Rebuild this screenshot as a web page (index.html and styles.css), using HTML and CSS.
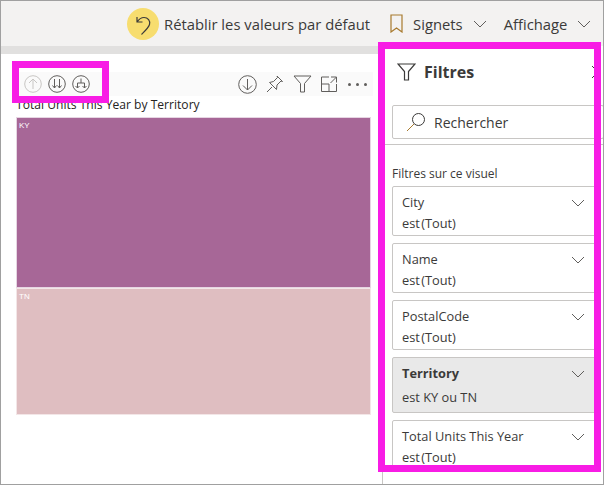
FILE: index.html
```html
<html>
	<head>
		<title>Filtres</title>
		<link rel="stylesheet" href="styles.css">
	</head>
	<body>
		<div class="window">
			<div class="toolbar">
				<span class="reset-circle">
					<svg width="20" height="24" viewBox="0 0 20 24" fill="none" stroke="#3b3a39" stroke-width="1.200"><path d="M4 5v5h5.500M4 10c2-3 4-4.500 7-4.500 4 0 6.500 3.500 5.500 7-.8 3-4.500 6.500-8 10"/></svg>
				</span>
				<span class="tool-label">Rétablir les valeurs par défaut</span>
				<svg class="bookmark" width="13" height="19" viewBox="0 0 13 19" fill="none" stroke="#a87a2e" stroke-width="1.200"><path d="M1 1h11v17l-5.500-4L1 18z"/></svg>
				<span class="tool-label signets">Signets</span>
				<svg class="chev" width="14" height="8" viewBox="0 0 14 8" fill="none" stroke="#605e5c"><path d="M1 1l6 6 6-6"/></svg>
				<span class="tool-label affichage">Affichage</span>
				<svg class="chev" width="14" height="8" viewBox="0 0 14 8" fill="none" stroke="#605e5c"><path d="M1 1l6 6 6-6"/></svg>
			</div>
			<div class="main">
				<div class="canvas">
					<div class="canvas-strip"></div>
					<div class="visual">
						<div class="visual-head">
							<div class="drill">
								<svg width="18" height="18" viewBox="0 0 18 18" fill="none" stroke="#c8c6c4"><circle cx="9" cy="9" r="8.300"/><path d="M9 14V4M5 8l4-4 4 4"/></svg>
								<svg width="18" height="18" viewBox="0 0 18 18" fill="none" stroke="#605e5c"><circle cx="9" cy="9" r="8.300"/><path d="M6.500 4v9M4.500 10.500l2 2.500 2-2.500M11.500 4v9M9.500 10.500l2 2.500 2-2.500"/></svg>
								<svg width="18" height="18" viewBox="0 0 18 18" fill="none" stroke="#605e5c"><circle cx="9" cy="9" r="8.300"/><path d="M9 3.500V8M5.500 13V8h7v5M3.500 11l2 2 2-2M10.500 11l2 2 2-2"/></svg>
							</div>
							<div class="actions">
								<svg width="19" height="19" viewBox="0 0 19 19" fill="none" stroke="#605e5c"><circle cx="9.500" cy="9.500" r="8.800"/><path d="M9.500 4v11M5 10.500l4.500 4.500 4.500-4.500"/></svg>
								<svg width="18" height="18" viewBox="0 0 18 18" fill="none" stroke="#605e5c"><path d="M1 17l5-5M3.500 7.500l7 7 .5-4.500 4-4 1.500.5L11 1l.5 1.500-4 4z"/></svg>
								<svg width="19" height="18" viewBox="0 0 19 18" fill="none" stroke="#605e5c"><path d="M1 1h17l-6.500 7.500V17h-4V8.500z"/></svg>
								<svg width="16" height="16" viewBox="0 0 16 16" fill="none" stroke="#605e5c"><path d="M8 1H.500v14.500H15.500V8M.500 8H8v7.500M10 1h5.500v5.500M15.500 1L9.500 7"/></svg>
								<span class="dots"><i></i><i></i><i></i></span>
							</div>
						</div>
						<div class="visual-title">Total Units This Year by Territory</div>
						<div class="treemap">
							<div class="tile tile-ky">KY</div>
							<div class="tile tile-tn">TN</div>
						</div>
					</div>
				</div>
				<div class="panel">
					<div class="panel-head">
						<svg width="19" height="18" viewBox="0 0 19 18" fill="none" stroke="#3b3a39" stroke-width="1.200"><path d="M1 1h17l-6.500 7.500V17h-4V8.500z"/></svg>
						<span class="panel-title">Filtres</span>
						<svg class="panel-close" width="8" height="14" viewBox="0 0 8 14" fill="none" stroke="#3b3a39"><path d="M1 1l6 6-6 6"/></svg>
					</div>
					<div class="search">
						<svg width="20" height="20" viewBox="0 0 20 20" fill="none" stroke="#3b3a39"><circle cx="12.500" cy="7.500" r="6"/><path d="M8 12l-7 7" stroke="#a87a2e"/></svg>
						<span>Rechercher</span>
					</div>
					<div class="filters">
						<div class="filters-label">Filtres sur ce visuel</div>
						<div class="card">
							<div class="card-name">City<svg width="14" height="8" viewBox="0 0 14 8" fill="none" stroke="#605e5c"><path d="M1 1l6 6 6-6"/></svg></div>
							<div class="card-value">est (Tout)</div>
						</div>
						<div class="card">
							<div class="card-name">Name<svg width="14" height="8" viewBox="0 0 14 8" fill="none" stroke="#605e5c"><path d="M1 1l6 6 6-6"/></svg></div>
							<div class="card-value">est (Tout)</div>
						</div>
						<div class="card">
							<div class="card-name">PostalCode<svg width="14" height="8" viewBox="0 0 14 8" fill="none" stroke="#605e5c"><path d="M1 1l6 6 6-6"/></svg></div>
							<div class="card-value">est (Tout)</div>
						</div>
						<div class="card card-active">
							<div class="card-name">Territory<svg width="14" height="8" viewBox="0 0 14 8" fill="none" stroke="#605e5c"><path d="M1 1l6 6 6-6"/></svg></div>
							<div class="card-value">est KY ou TN</div>
						</div>
						<div class="card">
							<div class="card-name">Total Units This Year<svg width="14" height="8" viewBox="0 0 14 8" fill="none" stroke="#605e5c"><path d="M1 1l6 6 6-6"/></svg></div>
							<div class="card-value">est (Tout)</div>
						</div>
					</div>
				</div>
			</div>
			<div class="mark mark-drill"></div>
			<div class="mark mark-panel"></div>
		</div>
	</body>
</html>
```

FILE: styles.css
```css
html, body {
  margin: 0;
  height: 100%;
}

body {
  font-family: "Open Sans", sans-serif;
  color: #3b3a39;
  background-color: #fff;
}

.window {
  position: relative;
  box-sizing: border-box;
  width: 604px;
  height: 485px;
  border: 1px solid #a0a0a0;
  display: flex;
  flex-direction: column;
  overflow: hidden;
}

.toolbar {
  height: 45px;
  flex: none;
  box-sizing: border-box;
  padding: 0 0 0 126px;
  display: flex;
  align-items: center;
  background-color: #f3f2f1;
}

.reset-circle {
  width: 32px;
  height: 32px;
  border-radius: 50%;
  background-color: #f7dd6f;
  display: flex;
  align-items: center;
  justify-content: center;
  margin-right: 5px;
}

.tool-label {
  font-size: 14.800px;
  white-space: nowrap;
}

.bookmark {
  margin-left: 20px;
}

.signets {
  margin-left: 10px;
}

.chev {
  margin-left: 10px;
}

.affichage {
  margin-left: 17px;
}

.main {
  flex: 1;
  display: flex;
  min-height: 0;
}

.canvas {
  flex: 1;
  display: flex;
  flex-direction: column;
}

.canvas-strip {
  height: 8px;
  background-color: #e1e0df;
}

.visual {
  padding: 18px 9px 0 15px;
}

.visual-head {
  height: 24px;
  background-color: #fafafa;
  display: flex;
  align-items: center;
  justify-content: space-between;
  padding: 0 6px 0 8px;
}

.drill {
  display: flex;
  gap: 6px;
}

.actions {
  display: flex;
  align-items: center;
  gap: 9px;
}

.dots {
  display: flex;
  gap: 5px;
  margin-left: 2px;
}

.dots i {
  width: 3px;
  height: 3px;
  border-radius: 50%;
  background-color: #605e5c;
}

.visual-title {
  font-size: 12.100px;
  line-height: 18px;
  color: #252423;
}

.treemap {
  margin: 3px 2px 0 0;
}

.tile {
  box-sizing: border-box;
  font-family: "Liberation Sans", sans-serif;
  font-size: 8px;
  color: #fff;
  padding: 3px 2px;
}

.tile-ky {
  height: 171px;
  background-color: #a76797;
  border: 1px solid #e6d5e2;
}

.tile-tn {
  height: 127px;
  background-color: #dfbec1;
  border: 1px solid #f3e6e7;
}

.panel {
  width: 221px;
  flex: none;
  box-sizing: border-box;
  border-left: 1px solid #c8c6c4;
  background-color: #fff;
  display: flex;
  flex-direction: column;
}

.panel-head {
  height: 52px;
  margin-bottom: 7px;
  flex: none;
  display: flex;
  align-items: center;
  padding-left: 14px;
}

.panel-title {
  font-size: 16px;
  font-weight: 700;
  margin-left: 8px;
}

.panel-close {
  margin-left: auto;
  margin-right: 4px;
}

.search {
  height: 34px;
  flex: none;
  box-sizing: border-box;
  margin-left: 9px;
  border: 1px solid #c8c6c4;
  border-radius: 2px;
  display: flex;
  align-items: center;
  gap: 8px;
  padding-left: 13px;
  font-size: 14px;
  width: 212px;
}

.filters {
  margin-top: 5px;
  height: 321px;
  overflow: hidden;
  border-top: 1px solid #c8c6c4;
  padding: 20px 3px 0 9px;
}

.filters-label {
  font-size: 12px;
  line-height: 18px;
  margin-bottom: 3px;
}

.card {
  box-sizing: border-box;
  height: 50px;
  margin-bottom: 7px;
  border: 1px solid #c8c6c4;
  border-radius: 2px;
  padding: 5px 0 0 9px;
  font-size: 12.800px;
  line-height: 21px;
}

.card-name {
  display: flex;
  align-items: center;
  justify-content: space-between;
  padding-right: 14px;
}

.card-value {
  word-spacing: -2px;
}

.card-active {
  height: 56px;
  background-color: #e9e9e9;
}

.card-active .card-name {
  font-weight: 700;
}

.card-active .card-value {
  margin-top: 3px;
  word-spacing: normal;
}

.mark {
  position: absolute;
  box-sizing: border-box;
  border: 7px solid #f81ce5;
}

.mark-drill {
  left: 11px;
  top: 60px;
  width: 97px;
  height: 42px;
}

.mark-panel {
  left: 377px;
  top: 41px;
  width: 223px;
  height: 430px;
}
```
